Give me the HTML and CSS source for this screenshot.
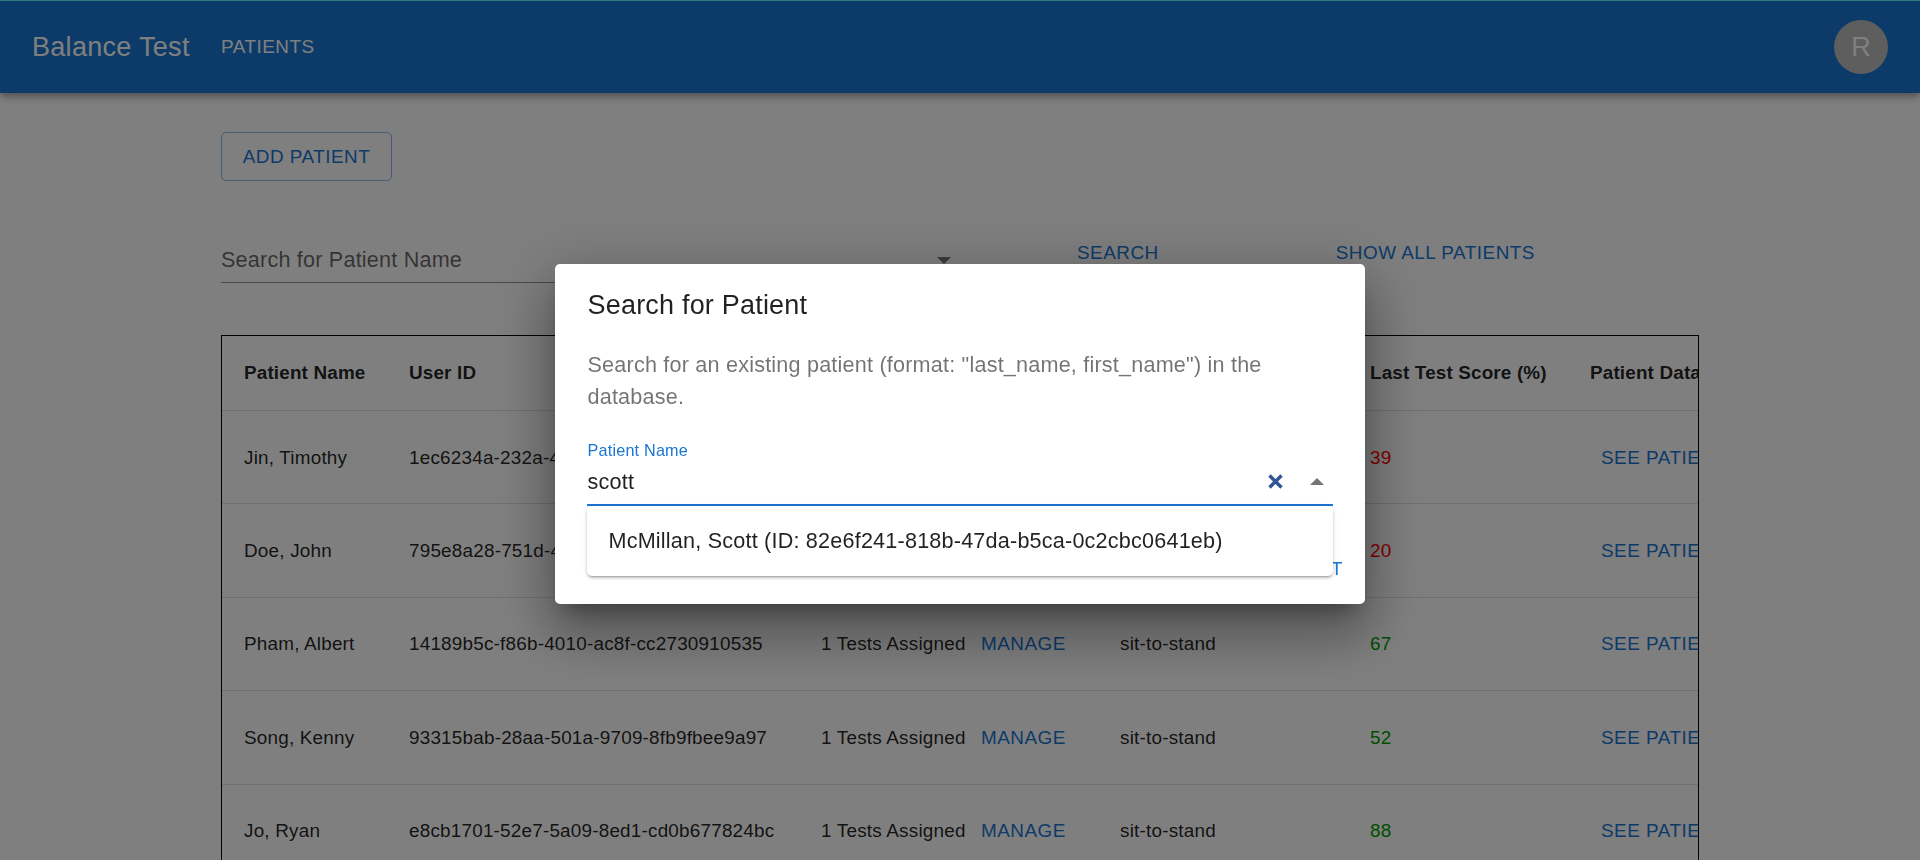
FILE: index.html
```html
<!DOCTYPE html>
<html>
<head>
	<meta charset="utf-8">
	<meta name="viewport" content="width=device-width, initial-scale=1">
	<title>Balance Test</title>
	<link rel="stylesheet" href="styles.css">
</head>
<body>

<header class="appbar">
	<div class="brand">Balance Test</div>
	<a class="nav-link">PATIENTS</a>
	<div class="avatar">R</div>
</header>

<main class="content">
	<button class="btn-outlined">ADD PATIENT</button>

	<div class="search-row">
		<div class="search-field">
			<span class="placeholder">Search for Patient Name</span>
			<svg class="search-arrow" viewBox="0 0 14 7"><path d="M0 0h14L7 7z"/></svg>
		</div>
		<button class="btn-text btn-search">SEARCH</button>
		<button class="btn-text btn-all">SHOW ALL PATIENTS</button>
	</div>

	<div class="table-box">
		<table class="patients">
			<colgroup>
				<col class="col-name">
				<col class="col-id">
				<col class="col-tests">
				<col class="col-type">
				<col class="col-score">
				<col class="col-data">
			</colgroup>
			<thead>
				<tr>
					<th>Patient Name</th>
					<th>User ID</th>
					<th>Tests</th>
					<th>Last Test</th>
					<th>Last Test Score (%)</th>
					<th>Patient Data</th>
				</tr>
			</thead>
			<tbody>
				<tr>
					<td>Jin, Timothy</td>
					<td>1ec6234a-232a-4</td>
					<td></td>
					<td></td>
					<td class="low">39</td>
					<td><button class="btn-text">SEE PATIENT</button></td>
				</tr>
				<tr>
					<td>Doe, John</td>
					<td>795e8a28-751d-4</td>
					<td></td>
					<td></td>
					<td class="low">20</td>
					<td><button class="btn-text">SEE PATIENT</button></td>
				</tr>
				<tr>
					<td>Pham, Albert</td>
					<td>14189b5c-f86b-4010-ac8f-cc2730910535</td>
					<td><span class="assigned">1 Tests Assigned</span><button class="btn-text">MANAGE</button></td>
					<td>sit-to-stand</td>
					<td class="high">67</td>
					<td><button class="btn-text">SEE PATIENT</button></td>
				</tr>
				<tr>
					<td>Song, Kenny</td>
					<td>93315bab-28aa-501a-9709-8fb9fbee9a97</td>
					<td><span class="assigned">1 Tests Assigned</span><button class="btn-text">MANAGE</button></td>
					<td>sit-to-stand</td>
					<td class="high">52</td>
					<td><button class="btn-text">SEE PATIENT</button></td>
				</tr>
				<tr>
					<td>Jo, Ryan</td>
					<td>e8cb1701-52e7-5a09-8ed1-cd0b677824bc</td>
					<td><span class="assigned">1 Tests Assigned</span><button class="btn-text">MANAGE</button></td>
					<td>sit-to-stand</td>
					<td class="high">88</td>
					<td><button class="btn-text">SEE PATIENT</button></td>
				</tr>
			</tbody>
		</table>
	</div>
</main>

<div class="backdrop">
	<div class="dialog">
		<h2 class="dialog-title">Search for Patient</h2>
		<p class="dialog-text">Search for an existing patient (format: "last_name, first_name") in the database.</p>
		<div class="field">
			<label class="field-label">Patient Name</label>
			<div class="field-input">
				<span class="field-value">scott</span>
				<svg class="icon-clear" viewBox="0 0 15 15"><path d="M1.5 1.5l12 12M13.5 1.5l-12 12"/></svg>
				<svg class="icon-up" viewBox="0 0 14 7"><path d="M7 0l7 7H0z"/></svg>
			</div>
			<div class="options">
				<div class="option">McMillan, Scott (ID: 82e6f241-818b-47da-b5ca-0c2cbc0641eb)</div>
			</div>
		</div>
		<div class="dialog-actions">
			<button class="btn-dialog">CANCEL</button>
			<button class="btn-dialog">SUBMIT</button>
		</div>
	</div>
</div>

</body>
</html>
```

FILE: styles.css
```css
/* page */
html {
	height: 860px;
	overflow: hidden;
}
body {
	font-family: "Liberation Sans", Arial, sans-serif;
	margin: 0;
	padding: 0;
	height: 860px;
	overflow: hidden;
	background-color: #fff;
	color: rgba(0, 0, 0, 0.87);
}
button {
	font-family: inherit;
	background: none;
	border: none;
	cursor: pointer;
}

/* top bar */
.appbar {
	display: flex;
	align-items: center;
	height: 92px;
	padding: 0 32px;
	border-top: 1px solid #5cffff;
	background-color: #1976d2;
	color: #fff;
	box-shadow: 0 3px 6px -1px rgba(0, 0, 0, 0.2), 0 5px 7px 0 rgba(0, 0, 0, 0.14), 0 1px 14px 0 rgba(0, 0, 0, 0.12);
}
.brand {
	width: 189px;
	font-size: 27px;
	letter-spacing: 0.3px;
}
.nav-link {
	font-size: 18.9px;
	letter-spacing: 0.5px;
}
.avatar {
	display: flex;
	align-items: center;
	justify-content: center;
	width: 54px;
	height: 54px;
	margin-left: auto;
	border-radius: 50%;
	background-color: #bdbdbd;
	font-size: 27px;
}

/* main content */
.content {
	padding: 39px 0 0 221px;
}
.btn-outlined {
	display: block;
	width: 171px;
	height: 49px;
	padding: 0;
	border: 1px solid rgba(25, 118, 210, 0.5);
	border-radius: 5px;
	color: #1976d2;
	font-size: 18.9px;
	letter-spacing: 0.5px;
}
.btn-text {
	height: 49px;
	padding: 0 11px;
	color: #1976d2;
	font-size: 18.9px;
	letter-spacing: 0.5px;
	white-space: nowrap;
}

.search-row {
	display: flex;
	align-items: flex-start;
	margin-top: 47px;
}
.search-field {
	display: flex;
	align-items: center;
	justify-content: space-between;
	box-sizing: border-box;
	width: 733px;
	height: 55px;
	padding: 10px 3px 0 0;
	border-bottom: 1px solid rgba(0, 0, 0, 0.42);
}
.placeholder {
	font-size: 21.6px;
	letter-spacing: 0.2px;
	color: rgba(0, 0, 0, 0.6);
}
.search-arrow {
	width: 14px;
	height: 7px;
	fill: rgba(0, 0, 0, 0.54);
}
.btn-search {
	margin-left: 112px;
}
.btn-all {
	margin-left: 155px;
}

/* table */
.table-box {
	box-sizing: border-box;
	width: 1478px;
	height: 525px;
	margin-top: 52px;
	border: 1px solid #000;
	border-bottom: none;
	overflow: hidden;
}
.patients {
	table-layout: fixed;
	width: 1566px;
	border-collapse: collapse;
}
.col-name { width: 165px; }
.col-id { width: 412px; }
.col-tests { width: 299px; }
.col-type { width: 250px; }
.col-score { width: 220px; }
.col-data { width: 220px; }

.patients th,
.patients td {
	padding: 0 0 0 22px;
	border-bottom: 1px solid #e0e0e0;
	font-size: 18.9px;
	letter-spacing: 0.2px;
	text-align: left;
	white-space: nowrap;
}
.patients th {
	height: 74px;
	letter-spacing: 0.15px;
}
.patients td {
	height: 91.4px;
	padding-top: 1px;
}
.assigned {
	display: inline-block;
	width: 149px;
}
.low { color: #ff0000; }
.high { color: #009c00; }

/* dialog */
.backdrop {
	position: fixed;
	top: 0;
	left: 0;
	right: 0;
	bottom: 0;
	display: flex;
	justify-content: center;
	align-items: flex-start;
	background-color: rgba(0, 0, 0, 0.5);
}
.dialog {
	display: flex;
	flex-direction: column;
	box-sizing: border-box;
	width: 810px;
	height: 340px;
	margin-top: 264px;
	border-radius: 5px;
	background-color: #fff;
	box-shadow: 0 15px 20px -9px rgba(0, 0, 0, 0.3), 0 32px 51px 4px rgba(0, 0, 0, 0.22), 0 12px 62px 11px rgba(0, 0, 0, 0.18);
}
.dialog-title {
	margin: 0;
	padding: 22px 32.5px 0;
	font-size: 27px;
	font-weight: 400;
	line-height: 38px;
	letter-spacing: 0.2px;
}
.dialog-text {
	margin: 0;
	padding: 25px 32.5px 0;
	font-size: 21.6px;
	line-height: 32.4px;
	letter-spacing: 0.2px;
	color: rgba(0, 0, 0, 0.55);
}
.field {
	position: relative;
	margin: 26px 32px 0;
}
.field-label {
	display: block;
	padding-left: 0.5px;
	font-size: 16.2px;
	line-height: 20px;
	letter-spacing: 0.2px;
	color: #1976d2;
}
.field-input {
	display: flex;
	align-items: center;
	height: 44px;
	border-bottom: 2px solid #1976d2;
}
.field-value {
	flex: 1;
	padding-left: 0.5px;
	font-size: 21.6px;
	letter-spacing: 0.2px;
}
.icon-clear {
	width: 15px;
	height: 15px;
	fill: none;
	stroke: #2f5597;
	stroke-width: 3.4;
}
.icon-up {
	width: 14px;
	height: 7px;
	margin: 0 9px 0 27px;
	fill: rgba(0, 0, 0, 0.54);
}
.options {
	position: absolute;
	top: 100%;
	left: 0;
	right: 0;
	height: 70px;
	display: flex;
	align-items: center;
	background-color: #fff;
	border-radius: 5px;
	box-shadow: 0 3px 2px -2px rgba(0, 0, 0, 0.2), 0 2px 3px 0 rgba(0, 0, 0, 0.14), 0 1px 5px 0 rgba(0, 0, 0, 0.12);
}
.option {
	padding: 0 21.5px;
	font-size: 21.6px;
	letter-spacing: 0.2px;
}
.dialog-actions {
	display: flex;
	justify-content: flex-end;
	gap: 11px;
	margin-top: auto;
	padding: 0 11px 11px;
}
.btn-dialog {
	height: 49px;
	padding: 0 11px;
	color: #1976d2;
	font-size: 18.9px;
	letter-spacing: 0.5px;
}
```
